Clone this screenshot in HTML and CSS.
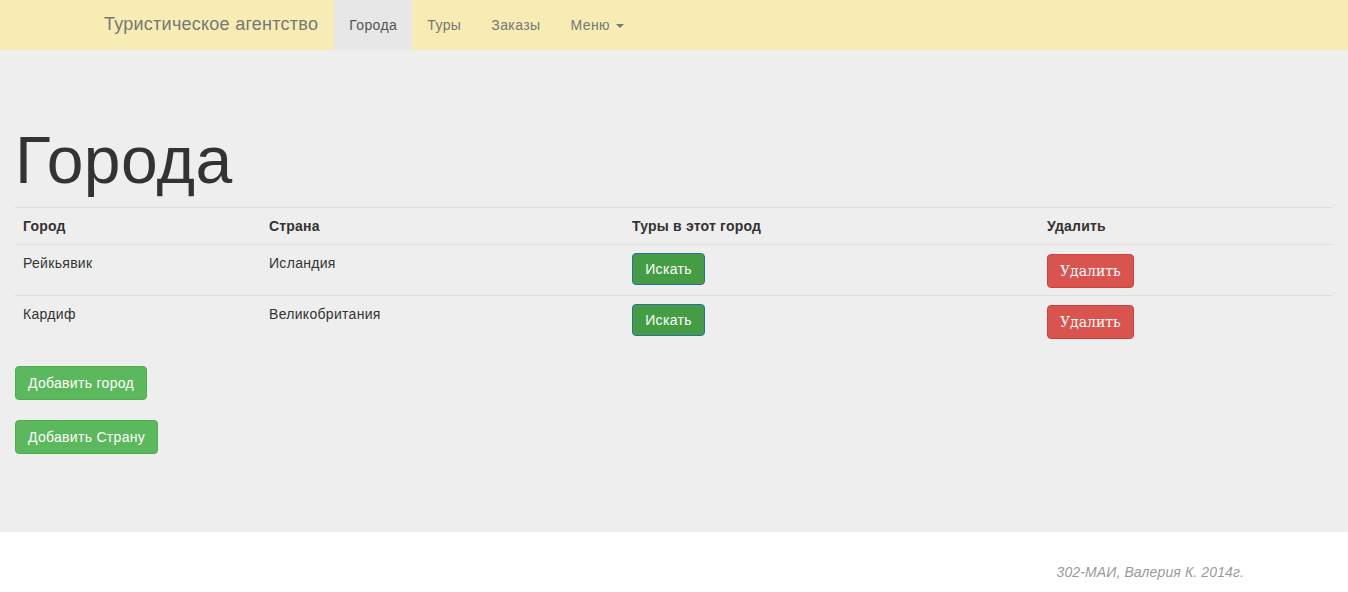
FILE: index.html
```html
<!DOCTYPE html>
<html lang="ru">
<head>
<meta charset="utf-8">
<title>Города</title>
<link rel="stylesheet" href="styles.css">
</head>
<body>
<nav class="navbar">
  <div class="nav-container">
    <a class="brand" href="#">Туристическое агентство</a>
    <ul class="nav">
      <li class="active"><a href="#">Города</a></li>
      <li><a href="#">Туры</a></li>
      <li><a href="#">Заказы</a></li>
      <li><a href="#">Меню <span class="caret"></span></a></li>
    </ul>
  </div>
</nav>
<main class="jumbotron">
  <h1 class="title">Города</h1>
  <table class="table">
    <thead>
      <tr><th class="c1">Город</th><th class="c2">Страна</th><th class="c3">Туры в этот город</th><th class="c4">Удалить</th></tr>
    </thead>
    <tbody>
      <tr>
        <td>Рейкьявик</td><td>Исландия</td>
        <td><a class="btn btn-search" href="#">Искать</a></td>
        <td><button class="btn btn-danger">Удалить</button></td>
      </tr>
      <tr>
        <td>Кардиф</td><td>Великобритания</td>
        <td><a class="btn btn-search" href="#">Искать</a></td>
        <td><button class="btn btn-danger">Удалить</button></td>
      </tr>
    </tbody>
  </table>
  <div class="actions">
    <a class="btn btn-success" href="#">Добавить город</a>
    <a class="btn btn-success" href="#">Добавить Страну</a>
  </div>
</main>
<footer class="footer">
  <div class="footer-container">
    <p class="footer-text">302-МАИ, Валерия К. 2014г.</p>
  </div>
</footer>
</body>
</html>
```

FILE: styles.css
```css
* { box-sizing: border-box; }
html, body { margin: 0; padding: 0; }
body {
  font-family: "Liberation Sans", Arial, sans-serif;
  font-size: 14px;
  line-height: 1.42857;
  letter-spacing: 0.3px;
  color: #333;
  background: #fff;
}
a { text-decoration: none; }

.navbar {
  height: 50px;
  background: #f8ecb5;
}
.nav-container {
  width: 1170px;
  margin: 0 auto;
  padding: 0 15px;
  display: flex;
  height: 50px;
}
.brand {
  display: block;
  height: 50px;
  padding: 14px 16px 15px 0;
  font-size: 18px;
  line-height: 20px;
  letter-spacing: 0.25px;
  color: #777;
}
.nav {
  list-style: none;
  margin: 0;
  padding: 0;
  display: flex;
}
.nav li a {
  display: block;
  padding: 15px 15px 15px 15px;
  line-height: 20px;
  height: 50px;
  color: #777;
  letter-spacing: 0.4px;
}
.nav li.active a {
  background: #e7e7e7;
  color: #555;
}
.caret {
  display: inline-block;
  width: 0;
  height: 0;
  margin-left: 2px;
  vertical-align: middle;
  border-top: 4px solid #777;
  border-left: 4px solid transparent;
  border-right: 4px solid transparent;
}

.jumbotron {
  background: #eee;
  padding: 71px 15px 78px;
  min-height: 482px;
}
.title {
  margin: 0 0 7px;
  font-size: 66px;
  font-weight: 400;
  line-height: 79px;
  letter-spacing: 0.4px;
  color: #333;
}
.table {
  width: 100%;
  border-collapse: collapse;
  margin-bottom: 20px;
}
.table th, .table td {
  padding: 8px;
  text-align: left;
  vertical-align: top;
  line-height: 20px;
  border-top: 1px solid #ddd;
}
.table th { font-weight: 700; letter-spacing: 0.2px; }
.table thead th { border-bottom: 1px solid #ddd; }
.c1 { width: 246px; }
.c2 { width: 363px; }
.c3 { width: 415px; }

.btn {
  display: inline-block;
  padding: 6px 12px;
  font-size: 14px;
  line-height: 20px;
  border: 1px solid transparent;
  border-radius: 4px;
  color: #fff;
  cursor: pointer;
}
.btn-search {
  display: block;
  width: 73px;
  text-align: center;
  background: #449d44;
  border-color: #2e6da4;
  padding: 5px 0;
  height: 32px;
  margin-bottom: 2px;
}
.btn-danger {
  display: block;
  background: #d9534f;
  border-color: #d43f3a;
  font-family: "DejaVu Serif", serif;
  font-size: 14px;
  letter-spacing: 0;
  height: 34px;
  padding: 6px 12px;
  margin-top: 1px;
  margin-bottom: -1px;
}
.btn-success {
  background: #5cb85c;
  border-color: #4cae4c;
}
.actions {
  display: flex;
  flex-direction: column;
  align-items: flex-start;
  gap: 20px;
}

.footer {
  height: 60px;
}
.footer-container {
  width: 1170px;
  margin: 0 auto;
  padding: 0 15px;
}
.footer-text {
  margin: 0;
  padding-top: 30px;
  text-align: right;
  font-style: italic;
  letter-spacing: 0.12px;
  color: #999;
  line-height: 20px;
}
```
